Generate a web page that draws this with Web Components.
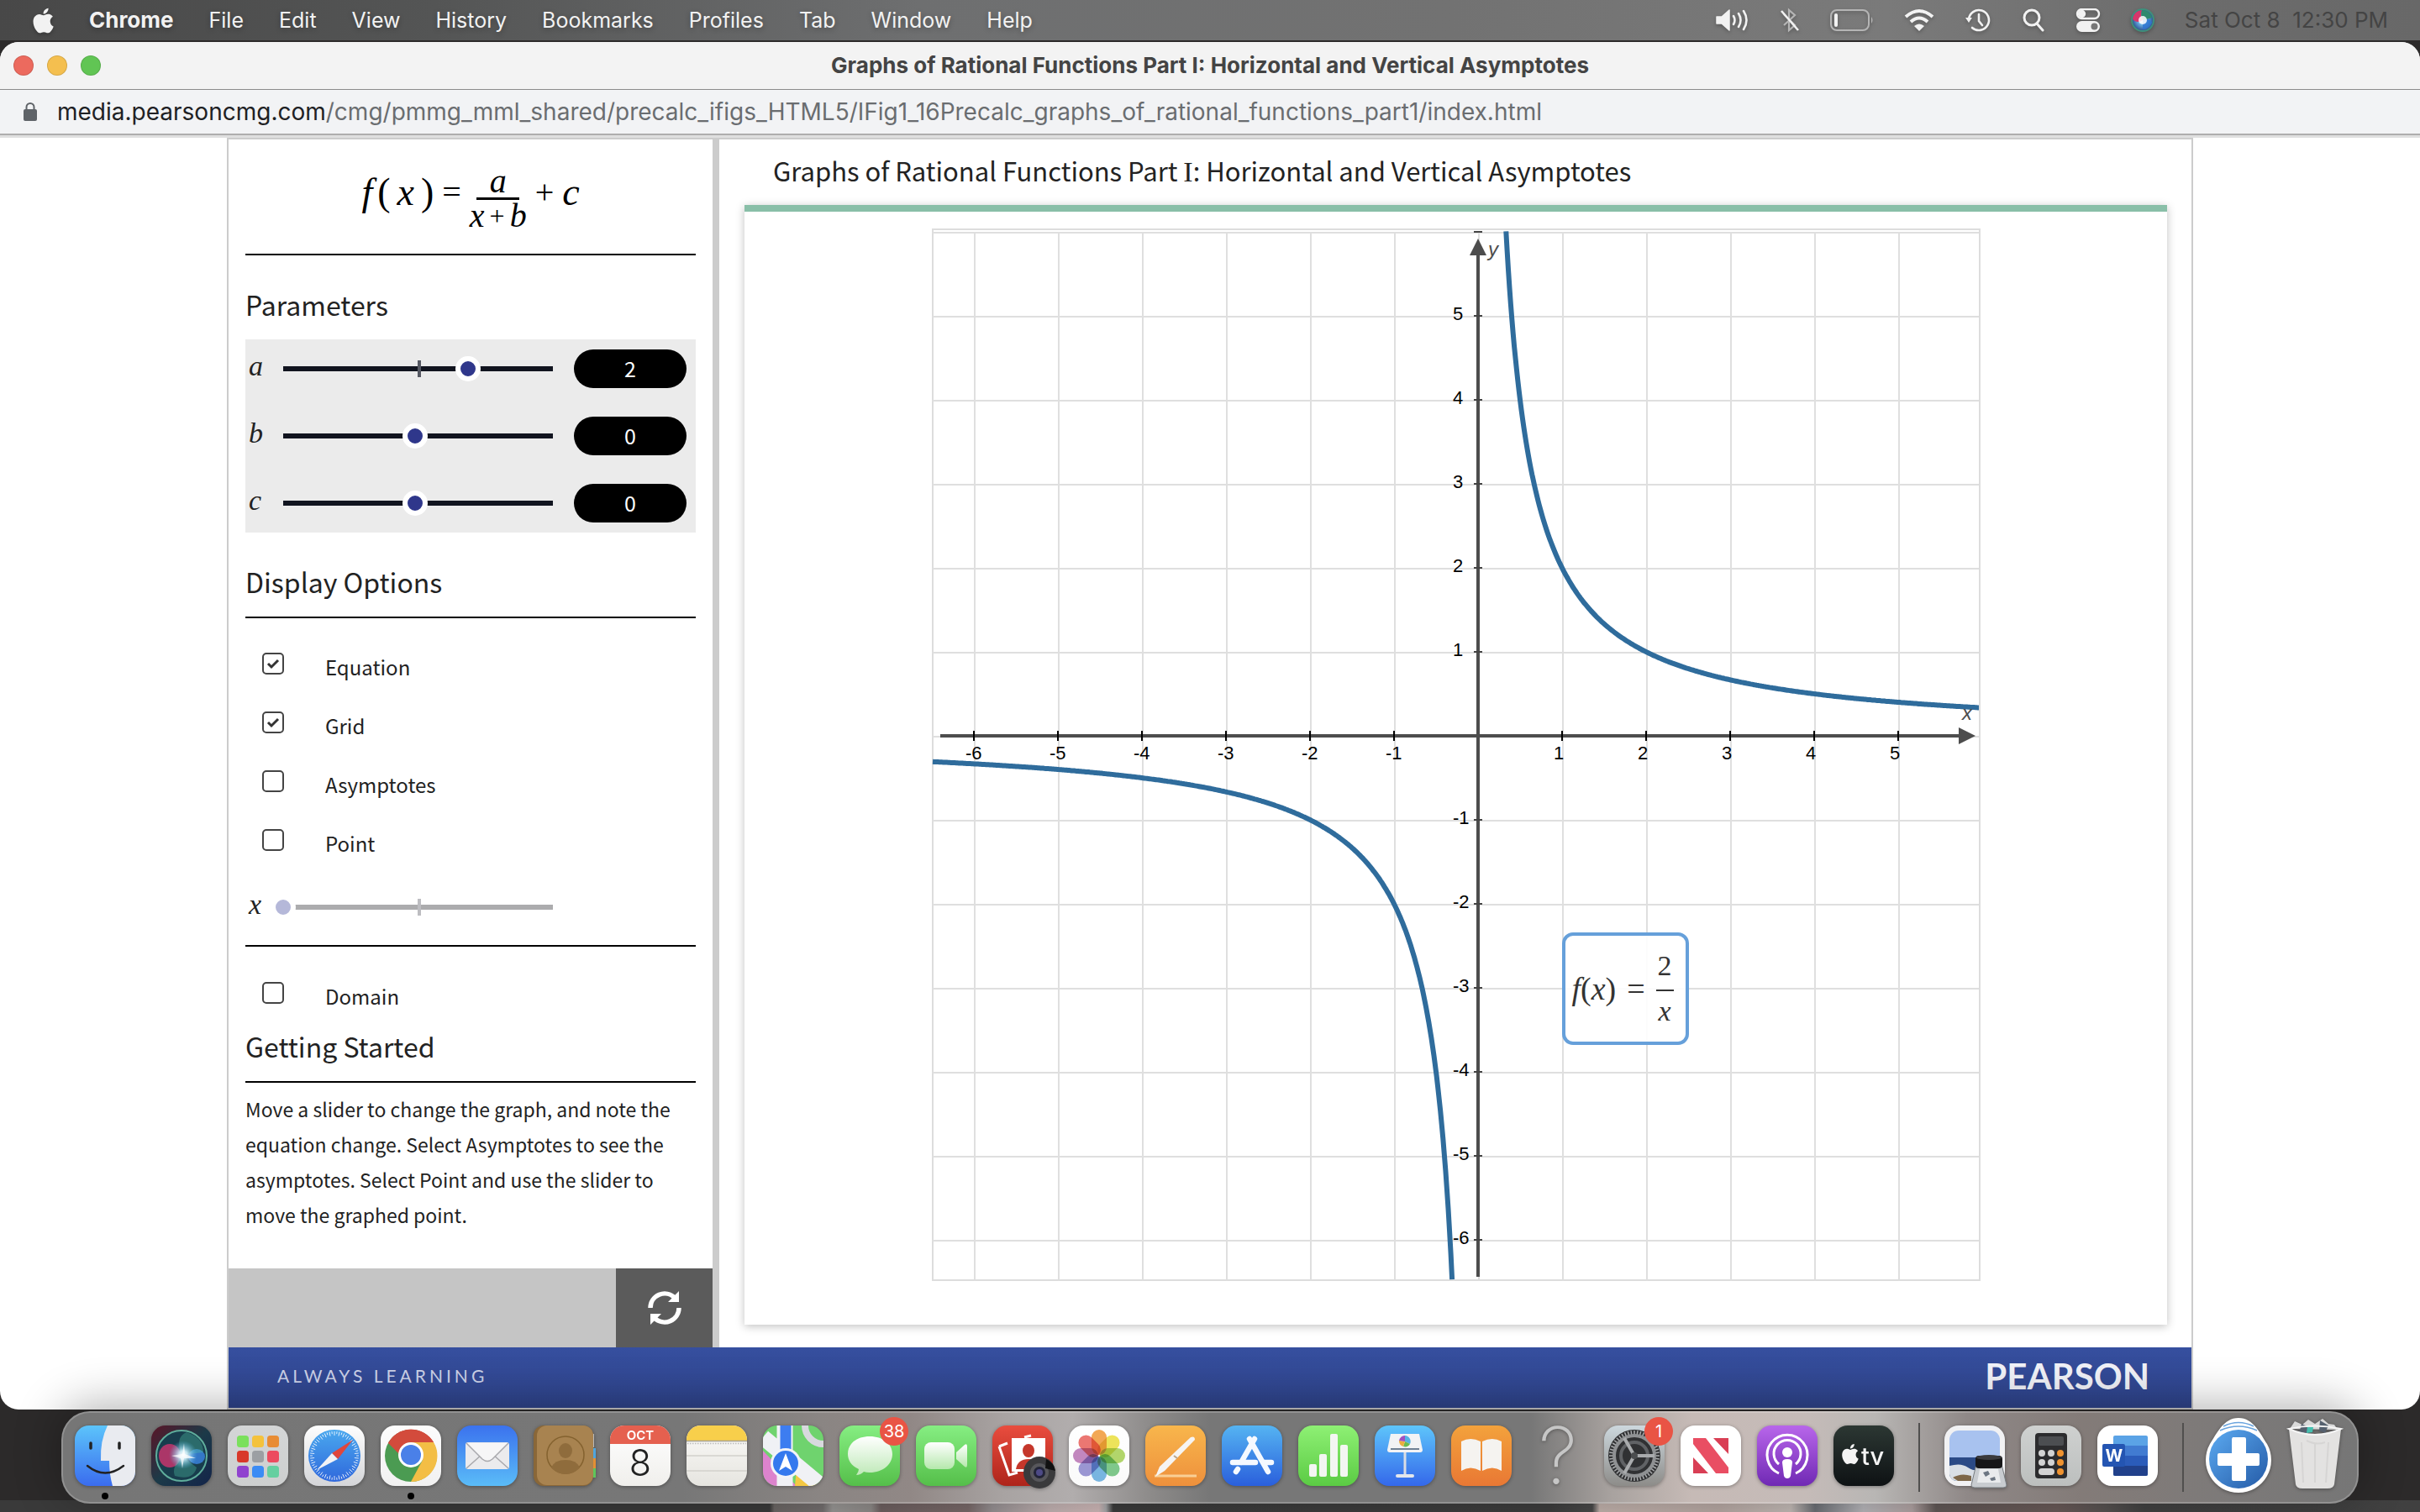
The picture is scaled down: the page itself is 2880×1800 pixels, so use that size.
<!DOCTYPE html>
<html lang="en">
<head>
<meta charset="utf-8">
<title>Graphs of Rational Functions Part I: Horizontal and Vertical Asymptotes</title>
<style>
  html, body { height: 100%; margin: 0; }
  body { font-family: Inter, "Liberation Sans", sans-serif; background: #3c3c3c; }
</style>
</head>
<body>
<mac-desktop>
  <menu-bar slot="menu"></menu-bar>
  <browser-window>
    <lesson-page>
      <side-panel slot="side"></side-panel>
      <graph-plot a="2" b="0" c="0"></graph-plot>
    </lesson-page>
  </browser-window>
  <mac-dock slot="dock"></mac-dock>
</mac-desktop>

<script>
/**
 * Base class: attaches an open shadow root with the markup of the subclass.
 */
class BaseElement extends HTMLElement {
  constructor() {
    super();
    this.attachShadow({ mode: 'open' });
  }

  connectedCallback() {
    const template = document.createElement('template');
    template.innerHTML = `<style>:host,*{box-sizing:border-box}${this.styles()}</style>${this.render()}`;
    this.shadowRoot.replaceChildren(template.content.cloneNode(true));
  }

  styles() { return ''; }

  render() { return '<slot></slot>'; }
}

const APPLE = 'M12.152 6.896c-.948 0-2.415-1.078-3.96-1.04-2.04.027-3.91 1.183-4.961 3.014-2.117 3.675-.546 9.103 1.519 12.09 1.013 1.454 2.208 3.09 3.792 3.039 1.52-.065 2.09-.987 3.935-.987 1.831 0 2.35.987 3.96.948 1.637-.026 2.676-1.48 3.676-2.948 1.156-1.688 1.636-3.325 1.662-3.415-.039-.013-3.182-1.221-3.22-4.857-.026-3.04 2.48-4.494 2.597-4.559-1.429-2.09-3.623-2.324-4.39-2.376-2-.156-3.675 1.09-4.61 1.09zM15.53 3.83c.843-1.012 1.4-2.427 1.245-3.83-1.207.052-2.662.805-3.532 1.818-.78.896-1.454 2.338-1.273 3.714 1.338.104 2.715-.688 3.559-1.701';

/* ---------- desktop ---------- */

class MacDesktop extends BaseElement {
  styles() {
    return `
      :host {
        display: flex;
        flex-direction: column;
        min-height: 100vh;
        gap: 2px;
        overflow: hidden;
        background:
          linear-gradient(90deg, #3a3a3a 31.8%, #6d6866 32%, #757070 34%, #9a9896 34.4%, #8f8b89 36%, #6f6161 36.4%, #7a6a6a 40%, #989294 41%, #c4b4b4 43.4%, #d0b9b9 45.4%, #a8a8aa 45.7%, #3c3c3c 46%, #3e3e3e 64%, #4a4a4a 65.8%, #c4b4ae 66.1%, #b9aaa5 71%, #c5bcb8 74%, #6d7076 75%, #b9b8bc 77%, #b2a4a4 79%, #625957 80%, #6b5b59 85%, #585352 87%, #424242 88.6%, #404040) bottom / 100% 14px no-repeat,
          #2c2a2a;
      }
      .dock {
        display: flex;
        justify-content: center;
        padding-bottom: 10px;
      }
      ::slotted(browser-window) { flex: 1; }
    `;
  }

  render() {
    return '<slot name="menu"></slot><slot></slot><div class="dock"><slot name="dock"></slot></div>';
  }
}

class MenuBar extends BaseElement {
  styles() {
    return `
      :host {
        display: flex;
        align-items: center;
        justify-content: space-between;
        height: 48px;
        padding: 0 38px;
        font-size: 25px;
        line-height: 32px;
        color: #f2f2f2;
        background: linear-gradient(90deg, #484848, #545555 18%, #6e6f70 38%, #727272 60%, #7a7a7a 78%, #6c6c6c 90%, #686868);
        text-shadow: 0 2px 6px rgba(0, 0, 0, .3);
      }
      nav, .status { display: flex; align-items: center; }
      nav { gap: 42px; }
      .status { gap: 36px; }
      nav a { color: inherit; text-decoration: none; }
      nav a.app { font-size: 26px; font-weight: 700; }
      svg { display: block; filter: drop-shadow(0 2px 2px rgba(0, 0, 0, .25)); }
      time { font-size: 26px; color: #444; text-shadow: none; white-space: pre; }
    `;
  }

  render() {
    const menus = ['File', 'Edit', 'View', 'History', 'Bookmarks', 'Profiles', 'Tab', 'Window', 'Help'];
    return `
      <nav>
        <a href="#" aria-label="Apple"><svg width="26" height="31" viewBox="1 0 21 24" fill="#f2f2f2"><path d="${APPLE}"/></svg></a>
        <a href="#" class="app">Chrome</a>
        ${menus.map((name) => `<a href="#">${name}</a>`).join('')}
      </nav>
      <div class="status">
        <svg width="40" height="28" viewBox="0 0 40 28" fill="none" stroke="#f2f2f2" stroke-width="2.6" stroke-linecap="round">
          <path d="M1 10h6l9-8v24l-9-8H1z" fill="#f2f2f2" stroke-linejoin="round" stroke-width="1.5"/>
          <path d="M21 9q3 5 0 10M27 6q5 8 0 16M33 3q7 11 0 22"/>
        </svg>
        <svg width="24" height="30" viewBox="0 0 24 30" fill="none" stroke="#b5b5b5" stroke-width="2.2">
          <path d="M5 8l13 13-7 6V3l7 6L5 21"/><path d="M2 4l20 23" stroke="#f2f2f2" stroke-width="2.6"/>
        </svg>
        <svg width="52" height="26" viewBox="0 0 52 26" fill="none" stroke="#b5b5b5" stroke-width="2">
          <rect x="1" y="1" width="45" height="24" rx="7"/><rect x="5" y="5" width="4" height="16" rx="2" fill="#f2f2f2" stroke="none"/>
          <path d="M49 9q3 4 0 8z" fill="#b5b5b5" stroke="none"/>
        </svg>
        <svg width="36" height="28" viewBox="0 0 36 28" fill="none" stroke="#f2f2f2" stroke-width="4">
          <path d="M2 10q16-14 32 0M8 16q10-9 20 0"/><path d="M12 21q6-5 12 0l-6 6z" fill="#f2f2f2" stroke="none"/>
        </svg>
        <svg width="32" height="30" viewBox="0 0 32 30" fill="none" stroke="#f2f2f2" stroke-width="2.6" stroke-linecap="round">
          <path d="M5 14a12 12 0 1 1 4 10M17 8v8l4 5"/><path d="M1 12h8l-4 6z" fill="#f2f2f2" stroke="none"/>
        </svg>
        <svg width="28" height="28" viewBox="0 0 28 28" fill="none" stroke="#f2f2f2" stroke-width="3" stroke-linecap="round">
          <circle cx="12" cy="11" r="9"/><path d="M18 18l7 8"/>
        </svg>
        <svg width="30" height="28" viewBox="0 0 30 28" fill="none" stroke="#f2f2f2" stroke-width="2.4">
          <rect x="2" y="1" width="26" height="11" rx="5.5"/><circle cx="7.500" cy="6.500" r="3.500" fill="#f2f2f2"/>
          <rect x="1" y="15" width="28" height="13" rx="6.500" fill="#f2f2f2" stroke="none"/><circle cx="22.500" cy="21.500" r="4" fill="#777" stroke="none"/>
        </svg>
        <svg width="28" height="28" viewBox="0 0 28 28">
          <defs><radialGradient id="g"><stop offset="0" stop-color="#fff"/><stop offset=".4" stop-color="#6cb6e8"/><stop offset="1" stop-color="#2a4b8c"/></radialGradient></defs>
          <circle cx="14" cy="14" r="13" fill="url(#g)" stroke="#3f8f7c" stroke-width="2"/>
          <path d="M2 12q2-9 11-10-2 8 1 12-6 4-11 0z" fill="#d6376b"/><path d="M14 14q8-4 11 3-4 8-11 8z" fill="#2d76d2" opacity=".8"/>
          <path d="M13 2q9 0 12 9-6 2-11 3-3-6-1-12z" fill="#2f8a6e"/>
          <circle cx="14" cy="14" r="5" fill="#fff" opacity=".85"/>
        </svg>
        <time>Sat Oct 8  12:30 PM</time>
      </div>
    `;
  }
}

/* ---------- browser ---------- */

class BrowserWindow extends BaseElement {
  styles() {
    return `
      :host {
        display: flex;
        flex-direction: column;
        border-radius: 22px;
        overflow: hidden;
        background: #fff;
      }
      .title {
        display: grid;
        grid-template-columns: 1fr auto 1fr;
        align-items: center;
        height: 57px;
        padding: 0 16px;
        background: #f3f3f3;
        border-bottom: 1px solid #8b8b8b;
      }
      .lights { display: flex; gap: 16px; }
      .lights button {
        width: 24px;
        height: 24px;
        padding: 0;
        border: 1px solid rgba(0, 0, 0, .12);
        border-radius: 50%;
        background: var(--light);
      }
      h1 { margin: 0; font-size: 26px; line-height: 32px; font-weight: 700; color: #444; }
      .address {
        display: flex;
        align-items: center;
        gap: 24px;
        height: 54px;
        padding: 0 28px;
        background: #f2f3f5;
        border-bottom: 2px solid #aeaeae;
        font-size: 28px;
        line-height: 34px;
        color: #6a6d70;
      }
      .address b { font-weight: 400; color: #202124; }
      .view {
        display: flex;
        flex: 1;
        justify-content: center;
        border-top: 3px solid #dfdfdf;
      }
    `;
  }

  render() {
    return `
      <div class="title">
        <div class="lights">
          <button aria-label="Close" style="--light:#ec6a5e"></button>
          <button aria-label="Minimize" style="--light:#f4bf4f"></button>
          <button aria-label="Zoom" style="--light:#61c554"></button>
        </div>
        <h1>Graphs of Rational Functions Part I: Horizontal and Vertical Asymptotes</h1>
      </div>
      <div class="address">
        <svg width="16" height="22" viewBox="0 0 16 22" fill="#5f6368"><rect y="8" width="16" height="14" rx="2"/><path d="M3.500 9V5.500a4.500 4.500 0 0 1 9 0V9" fill="none" stroke="#5f6368" stroke-width="2"/></svg>
        <span><b>media.pearsoncmg.com</b>/cmg/pmmg_mml_shared/precalc_ifigs_HTML5/IFig1_16Precalc_graphs_of_rational_functions_part1/index.html</span>
      </div>
      <div class="view"><slot></slot></div>
    `;
  }
}

class LessonPage extends BaseElement {
  styles() {
    return `
      :host {
        display: flex;
        flex-direction: column;
        width: 81.25%;
        border: 2px solid #ccc;
        font-family: "Noto Sans CJK SC", "Open Sans", sans-serif;
        color: #222;
      }
      .columns { display: flex; flex: 1; }
      ::slotted(side-panel) { flex: 0 0 584px; border-right: 8px solid #ccc; }
      main { display: flex; flex-direction: column; flex: 1; padding: 0 29px 27px 30px; }
      h2 {
        margin: 0;
        padding-left: 34px;
        font-size: 31px;
        line-height: 74px;
        height: 78px;
        font-weight: 400;
      }
      h2 i { font: 34px "Liberation Serif", serif; }
      .card {
        display: flex;
        flex: 1;
        justify-content: center;
        align-items: flex-start;
        padding-top: 20px;
        border-top: 8px solid #89bfa8;
        box-shadow: 0 2px 10px rgba(0, 0, 0, .25);
      }
      footer {
        display: flex;
        align-items: center;
        justify-content: space-between;
        height: 72px;
        padding: 0 50px 4px 58px;
        background: linear-gradient(#364f9f, #2f448c);
        font-family: Lato, sans-serif;
        color: #f1f2f8;
      }
      .motto { font-size: 21px; line-height: 24px; letter-spacing: 4px; color: #ccd2e8; }
      .brand { font-size: 42px; line-height: 48px; font-weight: 700; }
    `;
  }

  render() {
    return `
      <div class="columns">
        <slot name="side"></slot>
        <main>
          <h2>Graphs of Rational Functions Part <i>I</i>: Horizontal and Vertical Asymptotes</h2>
          <div class="card"><slot></slot></div>
        </main>
      </div>
      <footer><span class="motto">ALWAYS LEARNING</span><span class="brand">PEARSON</span></footer>
    `;
  }
}

/* ---------- side panel ---------- */

class ParamSlider extends BaseElement {
  styles() {
    return `
      :host { display: flex; align-items: center; height: 70px; --track: #11141f; --tick: #555862; --dot: #2f378b; }
      :host([off]) { --track: #acacae; --tick: #bdbdc1; --dot: #b5b8d9; }
      label {
        width: 30px;
        padding: 0 0 6px 4px;
        font: italic 34px/40px "Liberation Serif", serif;
      }
      input {
        appearance: none;
        width: 344px;
        height: 30px;
        margin: 0;
        background:
          linear-gradient(var(--tick), var(--tick)) 175px center / 4px 20px no-repeat,
          linear-gradient(var(--track), var(--track)) 15px center / 321px 6px no-repeat;
      }
      input::-webkit-slider-thumb {
        appearance: none;
        width: 30px;
        height: 30px;
        border: 6px solid #fff;
        border-radius: 50%;
        background: var(--dot);
      }
      output {
        width: 134px;
        height: 46px;
        margin-left: 17px;
        border-radius: 23px;
        background: #000;
        color: #fff;
        font-size: 25px;
        line-height: 44px;
        text-align: center;
      }
    `;
  }

  render() {
    const off = this.hasAttribute('off');
    const value = this.getAttribute('value');
    return `
      <label for="range">${this.getAttribute('name')}</label>
      <input id="range" type="range" min="-5" max="5" value="${value}" ${off ? 'disabled' : ''}>
      ${off ? '' : `<output for="range">${value}</output>`}
    `;
  }
}

class OptionCheck extends BaseElement {
  styles() {
    return `
      :host { display: flex; align-items: center; height: 70px; padding-left: 20px; gap: 49px; }
      input {
        appearance: none;
        width: 26px;
        height: 26px;
        margin: 0;
        border: 2px solid #444;
        border-radius: 5px;
      }
      input:checked {
        background: url('data:image/svg+xml,<svg xmlns="http://www.w3.org/2000/svg" viewBox="0 0 22 22"><path d="M5 11l4 4 8-8" fill="none" stroke="%23333" stroke-width="3"/></svg>') center / 22px 22px;
      }
      label { padding-top: 8px; font-size: 24px; line-height: 36px; }
    `;
  }

  render() {
    return `
      <input id="box" type="checkbox" ${this.hasAttribute('on') ? 'checked' : ''}>
      <label for="box"><slot></slot></label>
    `;
  }
}

class FunctionFormula extends BaseElement {
  styles() {
    return `
      :host {
        display: flex;
        align-items: center;
        justify-content: center;
        gap: 10px;
        height: 136px;
        font: italic 46px/52px "Liberation Serif", serif;
        color: #000;
      }
      b { font-weight: 400; font-style: normal; font-size: 40px; }
      .left { display: flex; align-items: center; gap: 6px; }
      .left span { font-style: normal; }
      .left span + i { padding: 0 2px; }
      .raised { padding-bottom: 10px; }
      .frac {
        display: grid;
        justify-items: center;
        padding-top: 4px;
        font-size: 40px;
        line-height: 38px;
      }
      .frac hr { width: 51px; height: 3px; margin: 0; border: 0; background: #000; }
      .frac div { display: flex; gap: 6px; }
      .frac b { font-size: 32px; }
    `;
  }

  render() {
    return `
      <div class="left raised"><i>f</i><span>(</span><i>x</i><span>)</span></div>
      <b class="raised">=</b>
      <div class="frac"><div>a</div><hr><div>x<b>+</b>b</div></div>
      <b class="raised">+</b>
      <i class="raised">c</i>
    `;
  }
}

class SidePanel extends BaseElement {
  styles() {
    return `
      :host { display: flex; flex-direction: column; }
      .content { flex: 1; padding: 0 20px; }
      hr { height: 2px; margin: 0; border: 0; background: #000; }
      h2 { margin: 34px 0 18px; font-size: 32px; line-height: 48px; font-weight: 400; }
      h2.last { margin-top: 4px; }
      .params { display: grid; gap: 10px; background: #ebebeb; }
      .options { padding: 19px 0 10px; }
      .options param-slider { margin-top: 10px; }
      .domain { padding-top: 20px; }
      p { margin: 10px 0; font-size: 23px; line-height: 42px; }
      .tools { display: flex; justify-content: flex-end; height: 94px; background: #c5c5c5; }
      button { width: 115px; padding: 0; border: 0; background: #5b5b5b; }
      button svg { display: block; margin: auto; }
    `;
  }

  render() {
    return `
      <div class="content">
        <function-formula></function-formula>
        <hr>
        <h2>Parameters</h2>
        <div class="params">
          <param-slider name="a" value="2"></param-slider>
          <param-slider name="b" value="0"></param-slider>
          <param-slider name="c" value="0"></param-slider>
        </div>
        <h2>Display Options</h2>
        <hr>
        <div class="options">
          <option-check on>Equation</option-check>
          <option-check on>Grid</option-check>
          <option-check>Asymptotes</option-check>
          <option-check>Point</option-check>
          <param-slider name="x" value="-5" off></param-slider>
        </div>
        <hr>
        <div class="domain"><option-check>Domain</option-check></div>
        <h2 class="last">Getting Started</h2>
        <hr>
        <p>Move a slider to change the graph, and note the equation change. Select Asymptotes to see the asymptotes. Select Point and use the slider to move the graphed point.</p>
      </div>
      <div class="tools">
        <button aria-label="Reset">
          <svg width="40" height="40" viewBox="0 0 40 40" fill="none" stroke="#fff" stroke-width="5.500">
            <path d="M3 20A17 17 0 0 1 32 8M37 20A17 17 0 0 1 8 32"/>
            <path d="M37 0v13H24zM3 40V27h13z" fill="#fff" stroke="none"/>
          </svg>
        </button>
      </div>
    `;
  }
}

/* ---------- graph ---------- */

class GraphPlot extends BaseElement {
  styles() {
    return `
      :host { display: block; position: relative; width: 1248px; }
      svg { display: block; width: 100%; }
      text { font: 22px "Liberation Sans", sans-serif; }
      .name { font-size: 24px; font-style: italic; fill: #4d4d4d; }
      /* draggable equation card, lies over the canvas */
      .equation {
        position: absolute;
        left: 750px;
        top: 838px;
        display: flex;
        align-items: center;
        justify-content: space-between;
        width: 151px;
        height: 134px;
        padding: 0 14px 0 8px;
        border: 4px solid #66a0da;
        border-radius: 13px;
        background: rgba(255, 255, 255, .9);
        font: 38px/40px "Liberation Serif", serif;
        color: #333;
      }
      .equation div { display: grid; font-size: 34px; text-align: center; }
      .equation div span { border-bottom: 2px solid #333; padding: 0 2px 8px; }
      .equation div i { padding-top: 4px; }
    `;
  }

  // Path of a/(x+b)+c between two x values, in canvas units
  branch(from, to) {
    const [a, b, c] = ['a', 'b', 'c'].map((n) => Number(this.getAttribute(n)));
    const points = [];
    for (let i = 0; i <= 400; i += 1) {
      const x = from + ((to - from) * i) / 400;
      const y = a / (x + b) + c;
      points.push(`${(650 + x * 100).toFixed(1)} ${(604 - y * 100).toFixed(1)}`);
    }
    return `M${points.join('L')}`;
  }

  render() {
    let grid = '';
    let ticks = '';
    for (let n = -6; n <= 6; n += 1) {
      const x = 650 + n * 100;
      const y = 604 - n * 100;
      if (n < 6) grid += `<path d="M${x + 1} 4V1251"/>`;
      grid += `<path d="M1 ${y + 1}H1246"/>`;
      if (n === 0) continue;
      ticks += `<path d="M645 ${y}h10" stroke="#444" stroke-width="2"/>`;
      if (n === 6) continue;
      ticks += `<path d="M${x} 598v12" stroke="#000" stroke-width="2"/>
        <text x="${x - 10}" y="632">${n}</text><text x="620" y="${y + 5}">${n}</text>`;
    }
    return `
      <svg viewBox="0 0 1248 1254">
        <rect x="1" y="1" width="1246" height="1251" fill="#fff" stroke="#ddd" stroke-width="2"/>
        <g stroke="#dfdfdf" stroke-width="2">${grid}</g>
        <g fill="none" stroke="#4d4d4d" stroke-width="4"><path d="M10 604H1224M650 30V1248"/></g>
        <path d="M650 12l10 20h-20zM1242 604l-20-10v20z" fill="#4d4d4d"/>
        ${ticks}
        <text class="name" x="662" y="33">y</text>
        <g fill="none" stroke="#2f6c9c" stroke-width="6">
          <path d="${this.branch(-6.49, -0.309)}"/><path d="${this.branch(0.333, 5.96)}"/>
        </g>
        <text class="name" x="1226" y="585">x</text>
      </svg>
      <div class="equation"><span><i>f</i>(<i>x</i>)</span><span>=</span><div><span>2</span><i>x</i></div></div>
    `;
  }
}

/* ---------- dock ---------- */

const gradient = (id, top, bottom) => `<linearGradient id="${id}" x2="0" y2="1"><stop stop-color="${top}"/><stop offset="1" stop-color="${bottom}"/></linearGradient>`;
const tile = (top, bottom = top) => `<defs>${gradient('bg', top, bottom)}</defs><rect width="72" height="72" rx="17" fill="url(#bg)"/>`;
const spin = (count, shape) => Array.from({ length: count }, (_, i) => shape(i, (360 / count) * i)).join('');

const ICONS = {
  Finder: `${tile('#5cc4fb', '#3a6cee')}<path d="M39 0h16a17 17 0 0 1 17 17v38a17 17 0 0 1-17 17H45q-4-14-4-30H31Q30 18 39 0z" fill="#e9ebf0"/>
    <path d="M19 21v6M53 21v6" stroke="#222" stroke-width="3.500" stroke-linecap="round"/><path d="M15 48q21 17 43 0" fill="none" stroke="#222" stroke-width="2.500" stroke-linecap="round"/>`,
  Siri: `<defs><linearGradient id="bg" x2="1" y2="1"><stop stop-color="#5a1426"/><stop offset=".5" stop-color="#1c3a48"/><stop offset="1" stop-color="#13244a"/></linearGradient>
    <radialGradient id="s"><stop stop-color="#fff"/><stop offset=".3" stop-color="#d5f4ff" stop-opacity=".9"/><stop offset="1" stop-color="#4ab0e0" stop-opacity="0"/></radialGradient></defs>
    <rect width="72" height="72" rx="17" fill="url(#bg)"/><circle cx="36" cy="36" r="30" fill="#183d4d" stroke="#5fae9c" stroke-width="2"/>
    <ellipse cx="22" cy="36" rx="13" ry="14" fill="#dc3472" opacity=".75"/><ellipse cx="54" cy="37" rx="10" ry="9" fill="#3c86e6" opacity=".8"/>
    <path d="M36 35Q28 14 42 8q20 6 20 24zM36 36q-12 14-8 24 22 6 26-10z" fill="#4fc2a4" opacity=".35"/><circle cx="38" cy="35" r="17" fill="url(#s)"/><path d="M24 36l13-2 2-13 1 13 13 5-14 0-2 12-2-12z" fill="#fff" opacity=".7"/>`,
  Launchpad: `${tile('#d3d5d6', '#cdcfcf')}${['#7ae05c', '#f4c23c', '#e88c34', '#d8382a', '#9c9fa3', '#ec4b5f', '#9043cf', '#3b8cf5', '#65cfa0']
    .map((c, i) => `<rect x="${11 + (i % 3) * 18}" y="${12 + Math.floor(i / 3) * 18}" width="14" height="14" rx="3.500" fill="${c}"/>`).join('')}`,
  Safari: `${tile('#fefefe', '#d4d5d8')}<defs>${gradient('s', '#4aa8ee', '#2f68dc')}</defs><circle cx="36" cy="36" r="31" fill="url(#s)"/>
    ${spin(60, (i, d) => `<path d="M36 7v${i % 2 ? 3 : 5}" stroke="#fff" stroke-width=".8" transform="rotate(${d} 36 36)"/>`)}
    <path d="M58 17L40 40 33 33z" fill="#e0463c"/><path d="M15 53l18-20 7 7z" fill="#f2f3f6"/>`,
  Chrome: `${tile('#fcfcfc', '#f1f1f1')}<circle cx="36" cy="36" r="31" fill="#4b9b52"/>
    <path d="M36 36L9 21A31 31 0 0 1 63 20z" fill="#d34b3c"/><path d="M36 20h27a31 31 0 0 1-27 47l14-26z" fill="#f3be45"/><path d="M9 21l15 26 12-11V20z" fill="#4b9b52"/><path d="M9 21a31 31 0 0 1 54-1H36a16 16 0 0 0-14 14l-5-5z" fill="#d34b3c"/>
    <circle cx="36" cy="35" r="15" fill="#fff"/><circle cx="36" cy="35" r="12" fill="#4a80e8"/>`,
  Mail: `${tile('#3b72ee', '#5abcf8')}<rect x="10" y="20" width="52" height="32" rx="3" fill="#ebebed"/><path d="M11 51l19-17M61 51L42 34" stroke="#a9a9ad" stroke-width="1.500"/><path d="M11 21l19 19q6 5 12 0l19-19" fill="#f6f6f7" stroke="#a9a9ad" stroke-width="1.500"/>`,
  Contacts: `<path d="M64 10h8v16h-8z" fill="#b9b9b9"/><path d="M64 27h10v12H64z" fill="#4fa5dd"/><path d="M64 39h10v12H64z" fill="#e38f34"/><path d="M64 51h10v11H64z" fill="#5ec65a"/>
    <rect width="71" height="72" rx="12" fill="#8a6738"/><rect x="4" width="67" height="71" rx="12" fill="#a88350"/><g fill="none" stroke="#84622f" stroke-width="1.500"><circle cx="38" cy="35" r="22"/></g><ellipse cx="38" cy="30" rx="8" ry="9" fill="#8f6c3c"/><path d="M21 50q4-9 17-9t17 9a22 22 0 0 1-34 0z" fill="#8f6c3c"/>`,
  Calendar: `${tile('#ffffff', '#f0efec')}<path d="M0 22v-5A17 17 0 0 1 17 0h38a17 17 0 0 1 17 17v5z" fill="#e5604f"/>
    <text x="36" y="17" font-size="15" font-weight="600" fill="#fff" text-anchor="middle">OCT</text><text x="36" y="60" font-size="43" font-weight="300" fill="#222" text-anchor="middle">8</text>`,
  Notes: `${tile('#fbfaf8', '#e6e5e0')}<path d="M0 18v-1A17 17 0 0 1 17 0h38a17 17 0 0 1 17 17v1z" fill="#f8cf4b"/><path d="M0 18.500h72" stroke="#a9a392" stroke-width="1.500"/><path d="M1 21.500h70" stroke="#bbb" stroke-width="1.500" stroke-dasharray="1.500 1.500"/><path d="M0 36h72M0 54h72" stroke="#d2d1cc" stroke-width="1.500"/>`,
  Maps: `<defs><clipPath id="c"><rect width="72" height="72" rx="17"/></clipPath></defs><g clip-path="url(#c)"><path d="M0 0h72v72H0z" fill="#6fd36e"/><path d="M0 30l40 42H0z" fill="#dc83cd"/><path d="M40 50l26 22H38z" fill="#f5c843"/>
    <path d="M0 14l72 60M26 0v72" stroke="#f0f1f5" stroke-width="19"/><circle cx="72" cy="0" r="22" fill="none" stroke="#d8d9de" stroke-width="8"/><path d="M27 0v34" stroke="#3d7df0" stroke-width="13"/></g>
    <circle cx="27" cy="45" r="18" fill="#f3f4f8"/><circle cx="27" cy="45" r="15" fill="#3579ee"/><path d="M27 33l8 21-8-5-8 5z" fill="#fff"/>`,
  Messages: `${tile('#86ee82', '#55bf4a')}<defs>${gradient('s', '#ffffff', '#bfe9b8')}</defs><path d="M36 13c16 0 27 9 27 21S52 56 36 56q-4 0-7-1-4 4-9 4 3-4 3-7C14 48 10 41 10 34c0-12 10-21 26-21z" fill="url(#s)"/>`,
  FaceTime: `${tile('#86ee82', '#55bf4a')}<defs>${gradient('s', '#ffffff', '#b5e8ac')}</defs><rect x="10" y="20" width="36" height="32" rx="8" fill="url(#s)"/><path d="M48 32l10-9q3-2 3 2v22q0 4-3 2l-10-9z" fill="url(#s)"/>`,
  'Photo Booth': `${tile('#e94d3e', '#ae241a')}<path d="M8 25l10-4M8 25l12 34 10-3M38 14l8-2" stroke="#fff" stroke-width="3" fill="none"/><rect x="23" y="15" width="40" height="40" fill="#fff"/><ellipse cx="43" cy="30" rx="7" ry="8" fill="#c5372b"/><path d="M28 52q2-12 15-12t15 12z" fill="#c5372b"/>
    <circle cx="56" cy="56" r="19" fill="#3a3a3c"/><circle cx="56" cy="56" r="11" fill="#57575b"/><circle cx="56" cy="56" r="7" fill="#222438"/><circle cx="56" cy="56" r="4" fill="#4d4a86"/><path d="M64 40a19 19 0 0 1 11 14l-12-3z" fill="#111"/>`,
  Photos: `${tile('#ffffff', '#fafafa')}<g opacity=".85">${spin(8, (i, d) => `<rect x="27" y="5" width="18" height="30" rx="9" fill="${['#f19a38', '#ebdf3e', '#a5cf52', '#6abf78', '#62a9dc', '#8a85cb', '#b873b4', '#e8605a'][i]}" transform="rotate(${d} 36 36)" style="mix-blend-mode:multiply"/>`)}</g>`,
  Pages: `${tile('#f8b64c', '#ee903c')}<path d="M11 60h50" stroke="#f9cf96" stroke-width="3"/><path d="M54 14q5-2 5 3L23 54l-11 7 5-12z" fill="#f6f4f2"/><path d="M34 36l4 3" stroke="#b9a58c" stroke-width="2"/>`,
  'App Store': `${tile('#55b4f2', '#2a5fdc')}<g stroke="#f5f9ff" stroke-width="6.500" stroke-linecap="round"><path d="M39 16L23 44M19 52l-2 3M33 16l22 39M13 44h27M51 44h8"/></g>`,
  Numbers: `${tile('#8ef074', '#5bcb44')}<g fill="#f3f6f2"><rect x="13" y="46" width="9" height="15" rx="2"/><rect x="25" y="34" width="9" height="27" rx="2"/><rect x="38" y="10" width="9" height="51" rx="2"/><rect x="50" y="23" width="9" height="38" rx="2"/></g>`,
  Keynote: `${tile('#5ec5fb', '#3468ea')}<path d="M19 10h34l4 19q0 3-3 3H18q-3 0-3-3z" fill="#f2f3f5"/><path d="M19 28h34" stroke="#6f8093" stroke-width="2"/><path d="M36 32v28" stroke="#d9dde4" stroke-width="3"/><rect x="25" y="58" width="22" height="4" rx="2" fill="#e4e7ec"/>
    <path d="M36 19v-7a7 7 0 0 1 6 10z" fill="#55b2e4"/><path d="M36 19l6 3a7 7 0 0 1-8 3z" fill="#6abb50"/><path d="M36 19l-2 6a7 7 0 0 1-5-7z" fill="#ecae3f"/><path d="M36 19l-7-1a7 7 0 0 1 7-6z" fill="#a14fc0"/>`,
  Books: `${tile('#f3a23c', '#e97834')}<path d="M12 19q11-6 23 0v35q-12-7-23 0zM37 19q12-6 23 0v35q-11-7-23 0z" fill="#f5f3f0"/>`,
  Help: '<text x="36" y="70" font-size="94" font-weight="200" fill="#c6c6c6" text-anchor="middle">?</text>',
  Settings: `${tile('#cdd8de', '#8d8c89')}<circle cx="36" cy="36" r="31" fill="#303133"/>${spin(48, (i, d) => `<path d="M36 6v5" stroke="#a9abad" stroke-width="1.500" transform="rotate(${d} 36 36)"/>`)}
    <circle cx="36" cy="36" r="24" fill="none" stroke="#8f9193" stroke-width="4"/><circle cx="36" cy="36" r="16" fill="none" stroke="#606265" stroke-width="4"/><path d="M36 36h24M36 36L24 15M36 36L24 57" stroke="#a9abad" stroke-width="4"/><circle cx="36" cy="36" r="4" fill="#4b4d4f"/>`,
  News: `${tile('#ffffff')}<path d="M15 15h15l27 35v7H42L15 22z" fill="#e94e63"/><path d="M39 15h18v19zM15 38v19h18z" fill="#d93f55"/>`,
  Podcasts: `${tile('#b866ea', '#7029b4')}<g fill="none" stroke="#fff" stroke-width="3"><path d="M26 57a24 24 0 1 1 20 0"/><path d="M26 46a16 16 0 1 1 20 0"/></g><circle cx="36" cy="32" r="6" fill="#fff"/><path d="M30 44q0-4 6-4t6 4l-2 16q-1 3-4 3t-4-3z" fill="#fff"/>`,
  TV: `${tile('#2c3733', '#0e1214')}<path d="${APPLE}" fill="#f4f4f4" transform="translate(8 22)"/><text x="33" y="47" font-size="29" font-weight="500" fill="#f4f4f4">tv</text>`,
  Preview: `${tile('#f1f1f3')}<rect x="6" y="6" width="60" height="60" rx="11" fill="#a8c2ef"/><path d="M6 38h60v20a9 9 0 0 1-9 8H15a9 9 0 0 1-9-8z" fill="#2b4a86"/><path d="M6 48q14-4 22 2t22 2v14H15a9 9 0 0 1-9-8z" fill="#d9dfe6"/><path d="M10 62q10-6 22-2v6H16z" fill="#7d674a"/>
    <path d="M38 46h30l6 25q0 3-4 3H36q-4 0-4-3z" fill="#c8ccd0" stroke="#777c80" stroke-width="1"/><path d="M42 52h22l3 16H39z" fill="#e9ebed"/><path d="M46 56l6-2 2 4-5 3zM54 63l6-2 1 4-5 1z" fill="#6c7682"/><rect x="37" y="36" width="32" height="15" rx="4" fill="#161618"/><ellipse cx="53" cy="38" rx="15" ry="3" fill="#3a3a3d"/>`,
  Calculator: `${tile('#cfd1d0', '#bcbfbe')}<rect x="17" y="9" width="38" height="54" rx="4" fill="#2c2c2e"/><rect x="21" y="13" width="30" height="11" rx="2" fill="#4c4e51"/>
    <g fill="#d3d3d3"><circle cx="25" cy="33" r="4"/><circle cx="36" cy="33" r="4"/><circle cx="25" cy="44" r="4"/><circle cx="36" cy="44" r="4"/><rect x="21" y="51" width="19" height="8" rx="4"/></g><g fill="#f0932f"><circle cx="47" cy="33" r="4"/><circle cx="47" cy="44" r="4"/><circle cx="47" cy="55" r="4"/></g>`,
  Word: `${tile('#ffffff')}<rect x="19" y="12" width="41" height="48" rx="2" fill="#5ba3e6"/><path d="M19 24h41v12H19z" fill="#417bd1"/><path d="M19 36h41v12H19z" fill="#2b5cba"/><path d="M19 48h41v10q0 2-2 2H21q-2 0-2-2z" fill="#21418b"/><rect x="6" y="22" width="27" height="27" rx="2" fill="#2455b2"/><text x="20" y="43" font-size="20" font-weight="700" fill="#fff" text-anchor="middle">W</text>`,
  Finances: `<defs><linearGradient id="bg" x2="1" y2="1"><stop stop-color="#5cabf2"/><stop offset="1" stop-color="#245aa6"/></linearGradient></defs><path d="M36-9C18-9 10 10 2 22a39 39 0 1 0 68 0C62 10 54-9 36-9z" fill="#fff"/><path d="M18 1q18-9 36 0M14 6q22-10 44 0" fill="none" stroke="#6aa4de" stroke-width="1.500"/><circle cx="36" cy="40" r="35" fill="url(#bg)"/><path d="M29 14h14q2 0 2 2v17h14q2 0 2 2v11q0 2-2 2H45v16q0 2-2 2H30q-2 0-2-2V48H13q-2 0-2-2V35q0-2 2-2h15V16z" fill="#fff"/>`,
  Trash: `<path d="M6 4l6-9 9 4 7-6 8 5 9-6 7 6 7 1 4 6z" fill="#d9d9d9"/><path d="M20-2l9 4-3 9-9-2zM42-6l10 6-4 9-7-3z" fill="#55606e"/><path d="M27 1l7 1-1 6-7 1z" fill="#45c0b0"/><path d="M5 4q31 12 62 0l-8 66q-1 5-8 5H21q-7 0-8-5z" fill="#e3e2e1"/><path d="M5 4q31-7 62 0-31 14-62 0z" fill="none" stroke="#f5f5f5" stroke-width="2"/><path d="M20 20l2 48M36 22v46M52 20l-3 48M26 18q12 6 22 2" stroke="#d6d5d4" stroke-width="2" fill="none"/>`,
};

class DockIcon extends BaseElement {
  styles() {
    return `
      :host { display: block; position: relative; width: 72px; height: 72px; }
      button { display: block; width: 100%; height: 100%; padding: 0; border: 0; background: none; font-family: inherit; }
      svg { display: block; width: 100%; height: 100%; overflow: visible; filter: drop-shadow(0 1px 2px rgba(0, 0, 0, .35)); }
      .badge {
        position: absolute;
        top: -10px;
        right: -10px;
        width: 34px;
        height: 34px;
        border-radius: 50%;
        background: #e95445;
        color: #fff;
        font-size: 20px;
        line-height: 34px;
        text-align: center;
      }
      .dot { position: absolute; left: 32px; bottom: -16px; width: 8px; height: 8px; border-radius: 50%; background: #000; }
    `;
  }

  render() {
    const name = this.getAttribute('name');
    const badge = this.getAttribute('badge');
    return `
      <button aria-label="${name}"><svg viewBox="0 0 72 72">${ICONS[name]}</svg></button>
      ${badge ? `<span class="badge">${badge}</span>` : ''}
      ${this.hasAttribute('running') ? '<span class="dot"></span>' : ''}
    `;
  }
}

class MacDock extends BaseElement {
  styles() {
    return `
      :host {
        display: flex;
        gap: 19px;
        height: 110px;
        padding: 15px 14px 0;
        position: relative;
        border: 2px solid rgba(255, 255, 255, .2);
        border-radius: 34px;
        background: linear-gradient(90deg, #767676, #777 27%, #8a8583 33%, #918886 37%, #a8a3a2 41%, #b1adad 44%, #8c8a89 47.5%, #777 50%, #777 64%, #a8a29f 67.5%, #c6bab6 71%, #c5bbb8 76%, #b8b6b4 79%, #8f8887 83%, #837b78 88%, #7d7a79 94%, #767676);
        box-shadow: 0 -6px 56px rgba(0, 0, 0, .32);
      }
      hr { width: 2px; height: 82px; margin: -3px 10px 0; border: 0; background: #504f4e; }
    `;
  }

  render() {
    const extras = { Finder: 'running', Chrome: 'running', Messages: 'badge="38"', Settings: 'badge="1"' };
    return Object.keys(ICONS).map((name) => {
      const divider = name === 'Preview' || name === 'Finances' ? '<hr>' : '';
      return `${divider}<dock-icon name="${name}" ${extras[name] || ''}></dock-icon>`;
    }).join('');
  }
}

customElements.define('mac-desktop', MacDesktop);
customElements.define('menu-bar', MenuBar);
customElements.define('browser-window', BrowserWindow);
customElements.define('lesson-page', LessonPage);
customElements.define('param-slider', ParamSlider);
customElements.define('option-check', OptionCheck);
customElements.define('function-formula', FunctionFormula);
customElements.define('side-panel', SidePanel);
customElements.define('graph-plot', GraphPlot);
customElements.define('dock-icon', DockIcon);
customElements.define('mac-dock', MacDock);
</script>
</body>
</html>
